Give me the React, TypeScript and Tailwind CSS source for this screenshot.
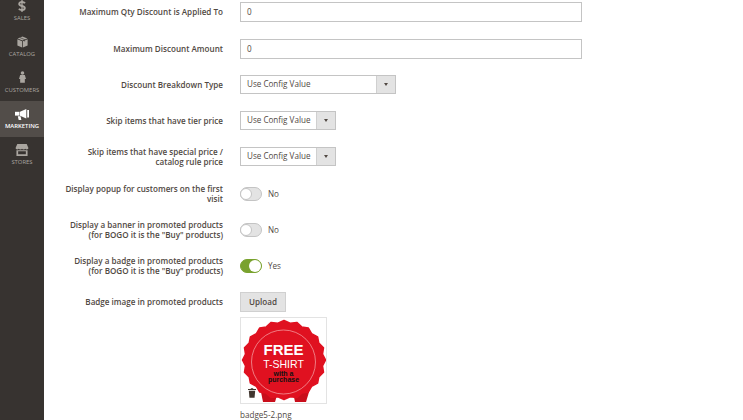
import type { ReactNode } from "react";

const navItems = [
  { label: "SALES", icon: "sales" },
  { label: "CATALOG", icon: "catalog" },
  { label: "CUSTOMERS", icon: "customers" },
  { label: "MARKETING", icon: "marketing", active: true },
  { label: "STORES", icon: "stores" },
];

const NavIcon = ({ name }: { name: string }) => {
  if (name === "sales") {
    return (
      <svg width="8" height="12" viewBox="0 0 8 12" fill="none" stroke="#aaa6a0" className="block">
        <path d="M7 3.2C6.4 2.4 5.300 2 4 2 2.300 2 1.200 2.800 1.200 4 1.200 6.700 6.800 5.300 6.800 8 6.800 9.300 5.600 10 4 10 2.600 10 1.500 9.500 .9 8.700" strokeWidth="1.900" />
        <path d="M4 0v12" strokeWidth="1.300" />
      </svg>
    );
  }
  if (name === "catalog") {
    return (
      <svg width="11" height="12" viewBox="0 0 14 15" className="block">
        <path d="M7 0.5l6.2 2.6-6.2 2.6L0.8 3.1z" fill="#aaa6a0" />
        <path d="M0.5 4.1l6 2.5v8L0.5 12z" fill="#aaa6a0" />
        <path d="M13.5 4.1l-6 2.5v8l6-2.6z" fill="#aaa6a0" />
        <path d="M3.5 1.8l6.2 2.6v2.4" stroke="#373330" strokeWidth="0.8" fill="none" />
      </svg>
    );
  }
  if (name === "customers") {
    return (
      <svg width="7" height="14" viewBox="0 0 9 15" fill="#aaa6a0" className="block">
        <circle cx="4.5" cy="2.4" r="2.3" />
        <path d="M1.5 5h6L9 10H7.5v5h-6v-5H0z" />
      </svg>
    );
  }
  if (name === "marketing") {
    return (
      <svg width="14" height="11" viewBox="0 0 14 11" fill="#ffffff" className="block">
        <path d="M0 2.800h4.500v3.800H0z" />
        <path d="M5 2.700L11.300 0v9.500L5 6.700z" />
        <path d="M12.200 1h1.800v7.400h-1.800z" />
        <path d="M2.800 7.200h2.700l.9 3.800H3.700z" />
      </svg>
    );
  }
  return (
    <svg width="14" height="12" viewBox="0 0 15 14" fill="#aaa6a0" className="block">
      <path d="M2 0h11l2 4.800c0 1-1 1.600-1.900 1.600-.8 0-1.400-.4-1.800-1-.4.6-1 1-1.900 1s-1.500-.4-1.900-1c-.4.600-1 1-1.900 1s-1.500-.4-1.900-1c-.4.600-1 1-1.800 1C1 6.400 0 5.800 0 4.800z" />
      <path d="M1 7.300h13V14H1zM3 8.600v3.400h9V8.600z" />
    </svg>
  );
};

const Sidebar = () => (
  <aside className="w-[44px] shrink-0 bg-[#373330] min-h-full">
    {navItems.map((item) => (
      <div
        key={item.label}
        className={`flex flex-col items-center justify-end pb-[7px] ${
          item.label === "SALES" ? "h-[29px]" : "h-[36px]"
        } ${item.active ? "bg-[#524d49]" : ""}`}
      >
        <NavIcon name={item.icon} />
        <span
          className={`mt-[2px] text-[5.9px] leading-[8px] whitespace-nowrap ${
            item.active ? "text-white font-semibold" : "text-[#aaa6a0]"
          }`}
        >
          {item.label}
        </span>
      </div>
    ))}
  </aside>
);

const Row = ({
  label,
  height,
  mt,
  children,
}: {
  label: ReactNode;
  height: string;
  mt: string;
  children: ReactNode;
}) => (
  <div className={`flex items-center gap-[17px] ${height} ${mt}`}>
    <div className="w-[179px] shrink-0 text-right text-[8.1px] leading-[10px] font-semibold text-[#514943]">
      {label}
    </div>
    {children}
  </div>
);

const TextInput = ({ value }: { value: string }) => (
  <div className="w-[342px] h-[20px] border border-[#c4c4c4] bg-white pl-[6px] flex items-center text-[8.1px] text-[#514943]">
    {value}
  </div>
);

const Select = ({ wide }: { wide?: boolean }) => (
  <div
    className={`h-[19px] flex border border-[#c4c4c4] bg-white text-[8.1px] text-[#514943] ${
      wide ? "w-[156px]" : "w-[96px]"
    }`}
  >
    <div className="flex-1 pl-[6px] flex items-center whitespace-nowrap">
      Use Config Value
    </div>
    <div className="w-[19px] bg-[#e3e3e3] border-l border-[#d0d0d0] flex items-center justify-center">
      <span className="block w-0 h-0 border-x-[2.5px] border-x-transparent border-t-[3px] border-t-[#514943]" />
    </div>
  </div>
);

const Toggle = ({ on }: { on?: boolean }) => (
  <div className="flex items-center gap-[6px]">
    <div
      className={`w-[22px] h-[14px] rounded-full flex border ${
        on
          ? "bg-[#79a22e] border-[#79a22e] justify-end"
          : "bg-[#e3e3e3] border-[#c4c4c4] justify-start"
      }`}
    >
      <span
        className={`block h-full w-[12px] rounded-full bg-white ${
          on ? "" : "border border-[#c4c4c4] -ml-px"
        }`}
      />
    </div>
    <span className="text-[8.1px] text-[#514943]">{on ? "Yes" : "No"}</span>
  </div>
);

const scallop = (() => {
  const pts: string[] = [];
  const n = 40;
  for (let i = 0; i <= n; i++) {
    const a = (i / n) * Math.PI * 2;
    const k = i % 2 === 0 ? 1 : 0.94;
    pts.push(`${(43 + 41.5 * k * Math.cos(a)).toFixed(1)},${(42 + 39.5 * k * Math.sin(a)).toFixed(1)}`);
  }
  return pts.join(" ");
})();

const Badge = () => (
  <div className="relative w-[87px] h-[87px] border border-[#e3e3e3] bg-white">
    <svg width="85" height="85" viewBox="0 0 85 85" className="block">
      <path d="M20 74h17l-3 10H22z" fill="#c90e1b" />
      <path d="M52 74h16l-3 10H54z" fill="#c90e1b" />
      <polygon points={scallop} fill="#e01120" stroke="#e01120" strokeWidth="1.5" strokeLinejoin="round" />
      <circle cx="42.5" cy="44" r="32" fill="#e01120" stroke="#f6a9ac" strokeWidth="0.7" />
      <text x="42.5" y="37" textAnchor="middle" fontFamily="Liberation Sans" fontWeight="700" fontSize="15" fill="#ffffff">
        FREE
      </text>
      <text x="42.5" y="50" textAnchor="middle" fontFamily="Liberation Sans" fontSize="10.5" fill="#ffffff">
        T-SHIRT
      </text>
      <text x="42.5" y="58" textAnchor="middle" fontFamily="Liberation Sans" fontWeight="700" fontSize="7" fill="#111111">
        with a
      </text>
      <text x="42.5" y="64" textAnchor="middle" fontFamily="Liberation Sans" fontWeight="700" fontSize="7" fill="#111111">
        purchase
      </text>
    </svg>
    <svg
      width="8"
      height="12"
      viewBox="0 0 10 12"
      fill="#41362f"
      className="absolute left-[7px] bottom-[4px]"
    >
      <path d="M3.5 0h3v1H10v1.4H0V1h3.500z" />
      <path d="M1 3.200h8L8.200 12H1.800z" />
    </svg>
  </div>
);

export default function App() {
  return (
    <div className="flex w-[743px] h-[420px] overflow-hidden bg-white font-['Open_Sans',sans-serif]">
      <Sidebar />
      <main className="flex-1 pt-[2px]">
        <Row label="Maximum Qty Discount is Applied To" height="h-[20px]" mt="mt-0">
          <TextInput value="0" />
        </Row>
        <Row label="Maximum Discount Amount" height="h-[20px]" mt="mt-[17px]">
          <TextInput value="0" />
        </Row>
        <Row label="Discount Breakdown Type" height="h-[19px]" mt="mt-[16px]">
          <Select wide />
        </Row>
        <Row label="Skip items that have tier price" height="h-[19px]" mt="mt-[17px]">
          <Select />
        </Row>
        <Row
          label={
            <>
              Skip items that have special price /
              <br />
              catalog rule price
            </>
          }
          height="h-[19px]"
          mt="mt-[17px]"
        >
          <Select />
        </Row>
        <Row
          label={
            <>
              Display popup for customers on the first
              <br />
              visit
            </>
          }
          height="h-[14px]"
          mt="mt-[21px]"
        >
          <Toggle />
        </Row>
        <Row
          label={
            <>
              Display a banner in promoted products
              <br />
              (for BOGO it is the "Buy" products)
            </>
          }
          height="h-[14px]"
          mt="mt-[22px]"
        >
          <Toggle />
        </Row>
        <Row
          label={
            <>
              Display a badge in promoted products
              <br />
              (for BOGO it is the "Buy" products)
            </>
          }
          height="h-[14px]"
          mt="mt-[22px]"
        >
          <Toggle on />
        </Row>
        <Row label="Badge image in promoted products" height="h-[20px]" mt="mt-[19px]">
          <button className="w-[46px] h-[20px] bg-[#e3e3e3] border border-[#d0d0d0] text-[8.1px] font-semibold text-[#514943]">
            Upload
          </button>
        </Row>
        <div className="ml-[196px] mt-[5px]">
          <Badge />
          <p className="mt-[6px] text-[8.1px] leading-[10px] text-[#514943]">badge5-2.png</p>
        </div>
      </main>
    </div>
  );
}
